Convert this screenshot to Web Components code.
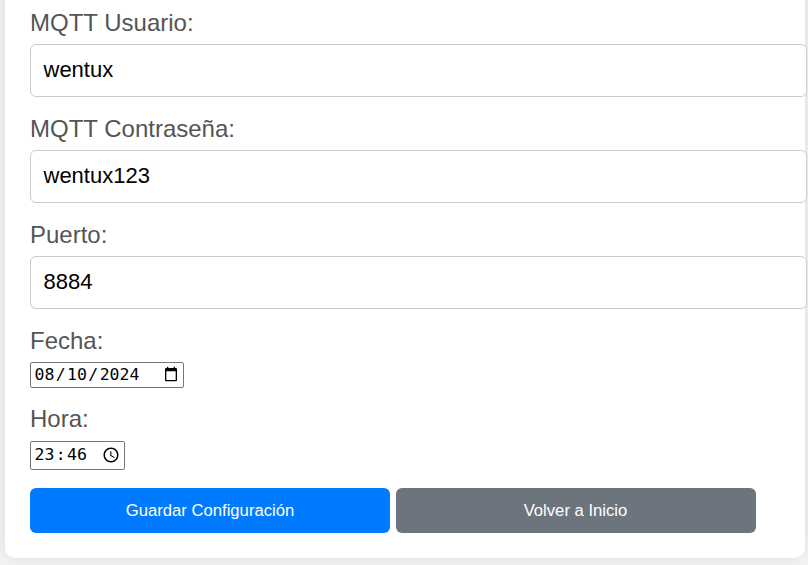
<!DOCTYPE html>
<html lang="es">
<head>
<meta charset="utf-8">
<title>Configuración</title>
<style>
html, body { margin: 0; height: 100%; overflow: hidden; }
body { background: #f4f4f4; font-family: "Liberation Sans", Arial, sans-serif; }
</style>
</head>
<body>
<config-card>
  <form-field label="MQTT Usuario:"><text-box>wentux</text-box></form-field>
  <form-field label="MQTT Contraseña:"><text-box>wentux123</text-box></form-field>
  <form-field label="Puerto:"><text-box>8884</text-box></form-field>
  <form-field label="Fecha:"><date-box day="08" month="10" year="2024"></date-box></form-field>
  <form-field label="Hora:" class="last"><time-box hour="23" minute="46"></time-box></form-field>
  <action-button slot="actions">Guardar Configuración</action-button>
  <action-button slot="actions" variant="secondary">Volver a Inicio</action-button>
</config-card>
<script>
const define = (name, render) => customElements.define(name, class extends HTMLElement {
  connectedCallback() {
    if (!this.shadowRoot) this.attachShadow({ mode: "open" }).innerHTML = render(this);
  }
});

define("config-card", () => `
<style>
:host { display: block; box-sizing: border-box; width: 800px; height: 578px; margin: -20px 0 0 5px;
  padding: 25px; background: #fff; border-radius: 10px; box-shadow: 0 0 15px rgba(0,0,0,.1); }
.actions { display: flex; gap: 6px; }
</style>
<slot></slot><div class="actions"><slot name="actions"></slot></div>`);

define("form-field", el => `
<style>
:host { display: flex; flex-direction: column; margin-bottom: 18px; }
label { display: block; height: 28px; line-height: 28px; padding-bottom: 7px; font-size: 24px; color: #555; }
:host(:first-child) { padding-top: 4px; }
:host(.last) label { line-height: 26px; }
</style>
<label>${el.getAttribute("label")}</label><slot></slot>`);

define("text-box", () => `
<style>
:host { display: flex; align-items: center; box-sizing: border-box; width: 777px; height: 53px;
  padding: 0 12.5px 2px; border: 1px solid #ccc; border-radius: 6px; background: #fff; color: #000; font-size: 22px; }
</style>
<slot></slot>`);

const pickerStyle = `
:host { display: flex; align-items: center; box-sizing: border-box; border: 1px solid #767676; border-radius: 2px;
  background: #fff; color: #000; padding: 0 3px 0 3.5px; font: 16.5px "DejaVu Sans Mono", monospace; }
span { white-space: pre; }
i { font-style: normal; display: inline-block; text-align: center; width: 12.7px; }
svg { display: block; margin-left: auto; }`;

define("date-box", el => `
<style>${pickerStyle}
:host { width: 154px; height: 26px; padding-bottom: 1px; }
svg { margin: 0 1px 2px auto; }
</style>
<span>${el.getAttribute("day")}<i>/</i>${el.getAttribute("month")}<i>/</i>${el.getAttribute("year")}</span>
<svg width="16" height="16" viewBox="0 0 24 24"><path d="M19.500 3H18V1h-2v2H8V1H6v2H4.500C3.600 3 3 3.900 3 5v16c0 1.100.6 2 1.500 2h15c.9 0 1.500-.9 1.500-2V5c0-1.100-.6-2-1.500-2zM19 21H5V8h14v13z"/></svg>`);

define("time-box", el => `
<style>${pickerStyle}
:host { width: 95px; height: 29px; padding-bottom: 1px; }
span { margin-bottom: 2px; }
svg { margin-right: 1px; }
</style>
<span>${el.getAttribute("hour")}<i>:</i>${el.getAttribute("minute")}</span>
<svg width="18" height="18" viewBox="0 0 24 24"><path d="M11.990 2C6.470 2 2 6.480 2 12s4.470 10 9.990 10C17.520 22 22 17.520 22 12S17.520 2 11.990 2zM12 20c-4.420 0-8-3.580-8-8s3.580-8 8-8 8 3.580 8 8-3.580 8-8 8zm.5-13H11v6l5.250 3.150.75-1.230-4.500-2.670z"/></svg>`);

define("action-button", () => `
<style>
:host { display: flex; align-items: center; justify-content: center; box-sizing: border-box; width: 360px; height: 45px;
  border-radius: 6px; background: #007bff; color: #fff; font-size: 16.67px; }
:host([variant="secondary"]) { background: #6c757d; padding-right: 1px; }
</style>
<slot></slot>`);
</script>
</body>
</html>
